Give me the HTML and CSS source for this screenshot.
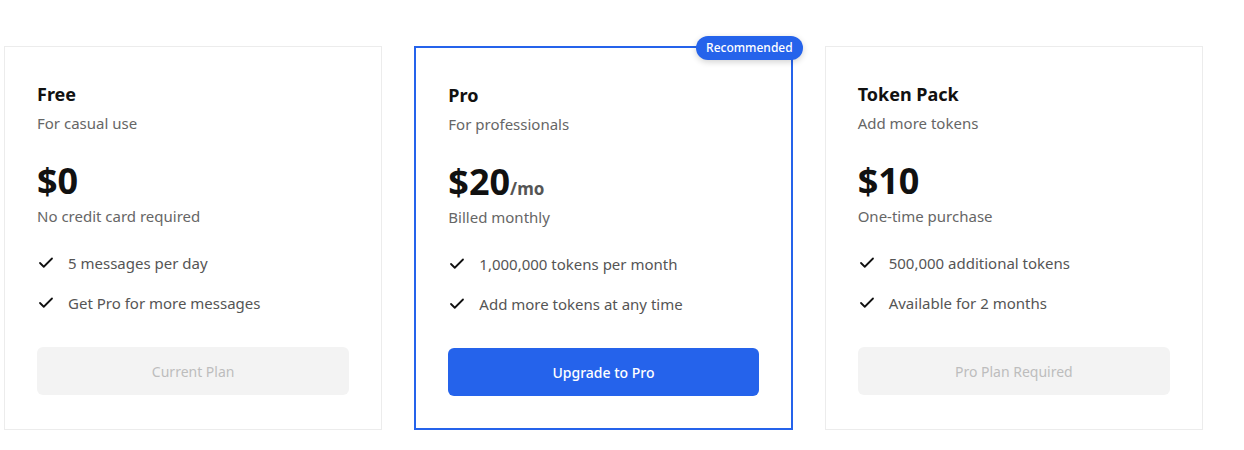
FILE: index.html
```html
<!DOCTYPE html>
<html lang="en">
<head>
<meta charset="utf-8">
<title>Plans</title>
<link rel="stylesheet" href="styles.css">
</head>
<body>
<div class="plans">
  <div class="card">
    <div class="name">Free</div>
    <div class="desc">For casual use</div>
    <div class="price"><span class="amount">$0</span></div>
    <div class="note">No credit card required</div>
    <ul class="features">
      <li><svg class="check" viewBox="0 0 24 24"><path d="M20 6 9 17l-5-5"/></svg><span>5 messages per day</span></li>
      <li><svg class="check" viewBox="0 0 24 24"><path d="M20 6 9 17l-5-5"/></svg><span>Get Pro for more messages</span></li>
    </ul>
    <button class="btn btn-disabled">Current Plan</button>
  </div>
  <div class="card card-featured">
    <span class="badge">Recommended</span>
    <div class="name">Pro</div>
    <div class="desc">For professionals</div>
    <div class="price"><span class="amount">$20</span><span class="per">/mo</span></div>
    <div class="note">Billed monthly</div>
    <ul class="features">
      <li><svg class="check" viewBox="0 0 24 24"><path d="M20 6 9 17l-5-5"/></svg><span>1,000,000 tokens per month</span></li>
      <li><svg class="check" viewBox="0 0 24 24"><path d="M20 6 9 17l-5-5"/></svg><span>Add more tokens at any time</span></li>
    </ul>
    <button class="btn btn-primary">Upgrade to Pro</button>
  </div>
  <div class="card">
    <div class="name">Token Pack</div>
    <div class="desc">Add more tokens</div>
    <div class="price"><span class="amount">$10</span></div>
    <div class="note">One-time purchase</div>
    <ul class="features">
      <li><svg class="check" viewBox="0 0 24 24"><path d="M20 6 9 17l-5-5"/></svg><span>500,000 additional tokens</span></li>
      <li><svg class="check" viewBox="0 0 24 24"><path d="M20 6 9 17l-5-5"/></svg><span>Available for 2 months</span></li>
    </ul>
    <button class="btn btn-disabled">Pro Plan Required</button>
  </div>
</div>
</body>
</html>
```
FILE: styles.css
```css
* { box-sizing: border-box; }
html, body { margin: 0; padding: 0; background: #ffffff; }
body {
  font-family: "Noto Sans", "Noto Sans CJK KR", sans-serif;
  color: #111111;
}
.plans {
  display: grid;
  grid-template-columns: repeat(3, 1fr);
  column-gap: 32px;
  width: 1203px;
  padding: 46px 0 0 4px;
  align-items: stretch;
}
.card {
  position: relative;
  background: #ffffff;
  border: 1px solid #ececec;
  padding: 32px;
  display: flex;
  flex-direction: column;
}
.card-featured {
  border: 2px solid #2563eb;
}
.badge {
  position: absolute;
  top: -12px;
  right: -12px;
  height: 24px;
  padding: 0 10px;
  border-radius: 12px;
  background: #2563eb;
  color: #ffffff;
  font-size: 12px;
  font-weight: 500;
  line-height: 24px;
  box-shadow: 0 2px 6px rgba(0, 0, 0, 0.18);
}
.name {
  font-size: 18px;
  font-weight: 700;
  line-height: 30px;
  color: #111111;
}
.desc {
  margin-top: 3px;
  font-size: 15px;
  line-height: 22px;
  color: #666666;
}
.price {
  margin-top: 27px;
  height: 40px;
  font-size: 36px;
  line-height: 40px;
  white-space: nowrap;
}
.amount {
  font-weight: 700;
  color: #111111;
}
.per {
  font-size: 17px;
  line-height: 1;
  font-weight: 700;
  color: #555555;
}
.note {
  margin-top: 4px;
  font-size: 15px;
  line-height: 22px;
  color: #666666;
}
.features {
  list-style: none;
  margin: 24px 0 0;
  padding: 0;
  display: flex;
  flex-direction: column;
  gap: 16px;
}
.features li {
  display: flex;
  align-items: center;
  gap: 13px;
  font-size: 15px;
  line-height: 24px;
  color: #555555;
}
.check {
  width: 18px;
  height: 18px;
  flex: none;
  fill: none;
  stroke: #111111;
  stroke-width: 2.4;
  stroke-linecap: round;
  stroke-linejoin: round;
}
.btn {
  margin-top: 32px;
  width: 100%;
  height: 48px;
  border: none;
  border-radius: 6px;
  font-family: inherit;
  font-size: 14px;
}
.btn-disabled {
  background: #f3f3f3;
  color: #bdbdbd;
}
.btn-primary {
  background: #2563eb;
  color: #ffffff;
  font-weight: 500;
}
```
